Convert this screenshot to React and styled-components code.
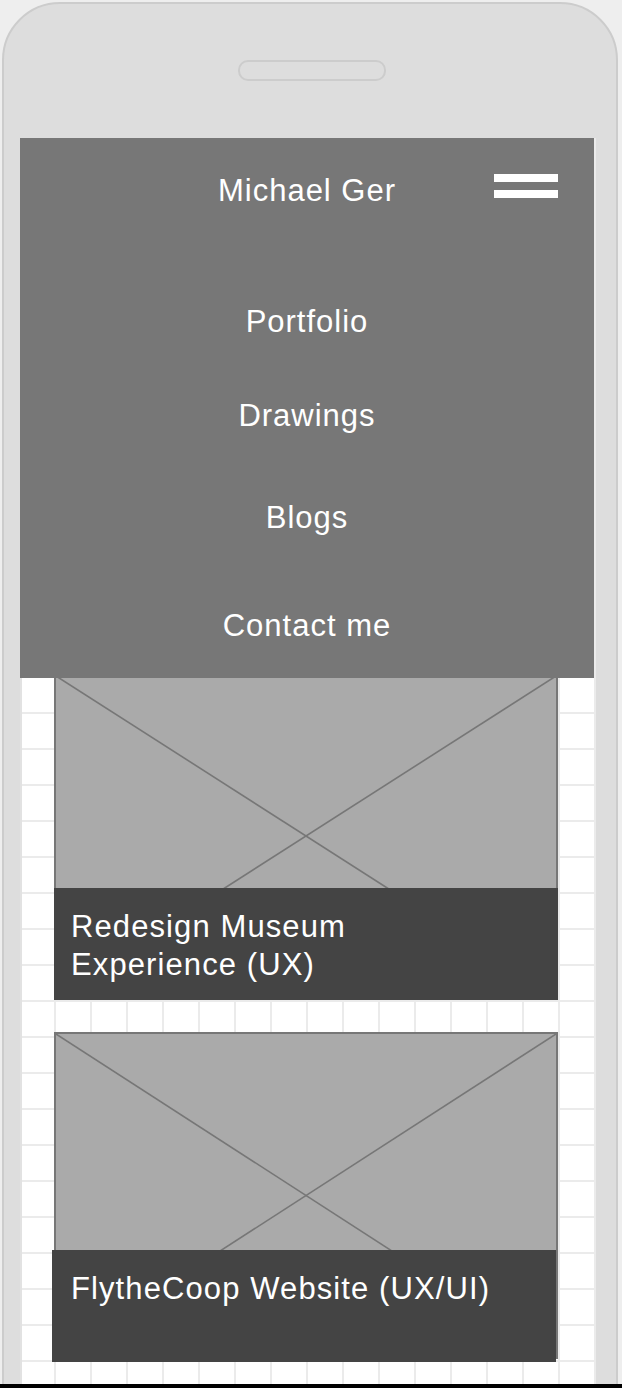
import React from "react";
import styled, { createGlobalStyle } from "styled-components";

const Global = createGlobalStyle`
  html, body {
    margin: 0;
    padding: 0;
    background: #eeeeee;
    font-family: "Liberation Sans", Arial, sans-serif;
  }
  * { box-sizing: border-box; }
`;

const Viewport = styled.div`
  width: 622px;
  height: 1384px;
  overflow: hidden;
  padding: 2px 0 0 2px;
  background: #eeeeee;
`;

const BottomBar = styled.div`
  width: 622px;
  height: 4px;
  background: #000;
`;

const Phone = styled.div`
  width: 616px;
  height: 1500px;
  background: #dddddd;
  border: 2px solid #cccccc;
  border-radius: 58px 58px 0 0;
  display: flex;
  flex-direction: column;
  padding: 0 20px 0 16px;
`;

const TopBezel = styled.div`
  height: 134px;
  flex: none;
`;

const Speaker = styled.div`
  width: 148px;
  height: 21px;
  margin: 56px 0 0 218px;
  border: 2px solid #cccccc;
  border-radius: 10px;
  background: #dddddd;
`;

const Screen = styled.div`
  position: relative;
  width: 576px;
  flex: 1;
  background-color: #ffffff;
  background-image:
    linear-gradient(to right, transparent 34px, #ebebeb 34px),
    linear-gradient(to bottom, transparent 34px, #ebebeb 34px);
  background-size: 36px 36px;
  box-shadow: inset 2px 0 0 #e2e2e2;
  padding: 536px 0 0 34px;
`;

const CardList = styled.div`
  display: flex;
  flex-direction: column;
  gap: 32px;
`;

const Card = styled.div`
  width: 504px;
  display: flex;
  flex-direction: column;
`;

const Placeholder = styled.div`
  width: 504px;
  height: ${(p) => p.$h}px;
  background: #aaaaaa;
  border: 2px solid #777777;
  svg {
    display: block;
    width: 100%;
    height: 100%;
  }
`;

const Caption = styled.div`
  position: relative;
  width: 504px;
  height: 112px;
  margin-top: ${(p) => p.$overlap}px;
  margin-left: ${(p) => -p.$shift}px;
  padding: 20px 12px 0 ${(p) => 17 + p.$shift}px;
  background: #444444;
  color: #ffffff;
  font-size: 31px;
  line-height: 38px;
  letter-spacing: 1.1px;
`;

const Nav = styled.nav`
  position: absolute;
  top: 0;
  left: 0;
  width: 574px;
  height: 540px;
  background: #777777;
  display: flex;
  flex-direction: column;
  align-items: center;
  color: #ffffff;
  font-size: 31px;
  line-height: 36px;
  letter-spacing: 1px;
`;

const Brand = styled.div`
  margin-top: 35px;
`;

const NavItem = styled.a`
  display: block;
  margin-top: ${(p) => p.$gap}px;
  color: #ffffff;
  text-decoration: none;
`;

const Burger = styled.div`
  position: absolute;
  top: 36px;
  right: 36px;
  width: 64px;
  display: flex;
  flex-direction: column;
  gap: 8px;
`;

const BurgerBar = styled.span`
  display: block;
  height: 8px;
  background: #ffffff;
`;

const Cross = () => (
  <svg viewBox="0 0 100 100" preserveAspectRatio="none">
    <line x1="0" y1="0" x2="100" y2="100" stroke="#777777" strokeWidth="1.6" vectorEffect="non-scaling-stroke" />
    <line x1="100" y1="0" x2="0" y2="100" stroke="#777777" strokeWidth="1.6" vectorEffect="non-scaling-stroke" />
  </svg>
);

const projects = [
  { title: ["Redesign Museum", "Experience (UX)"], h: 324, overlap: -110, shift: 0 },
  { title: ["FlytheCoop Website (UX/UI)"], h: 327, overlap: -109, shift: 2 },
];

const navItems = [
  { label: "Portfolio", gap: 95 },
  { label: "Drawings", gap: 58 },
  { label: "Blogs", gap: 66 },
  { label: "Contact me", gap: 72 },
];

export default function App() {
  return (
    <>
      <Global />
      <Viewport>
        <Phone>
          <TopBezel>
            <Speaker />
          </TopBezel>
          <Screen>
            <CardList>
              {projects.map((p) => (
                <Card key={p.title[0]}>
                  <Placeholder $h={p.h}>
                    <Cross />
                  </Placeholder>
                  <Caption $overlap={p.overlap} $shift={p.shift}>
                    {p.title.map((t) => (
                      <div key={t}>{t}</div>
                    ))}
                  </Caption>
                </Card>
              ))}
            </CardList>
            <Nav>
              <Brand>Michael Ger</Brand>
              <Burger>
                <BurgerBar />
                <BurgerBar />
              </Burger>
              {navItems.map((n) => (
                <NavItem key={n.label} $gap={n.gap}>
                  {n.label}
                </NavItem>
              ))}
            </Nav>
          </Screen>
        </Phone>
      </Viewport>
      <BottomBar />
    </>
  );
}
